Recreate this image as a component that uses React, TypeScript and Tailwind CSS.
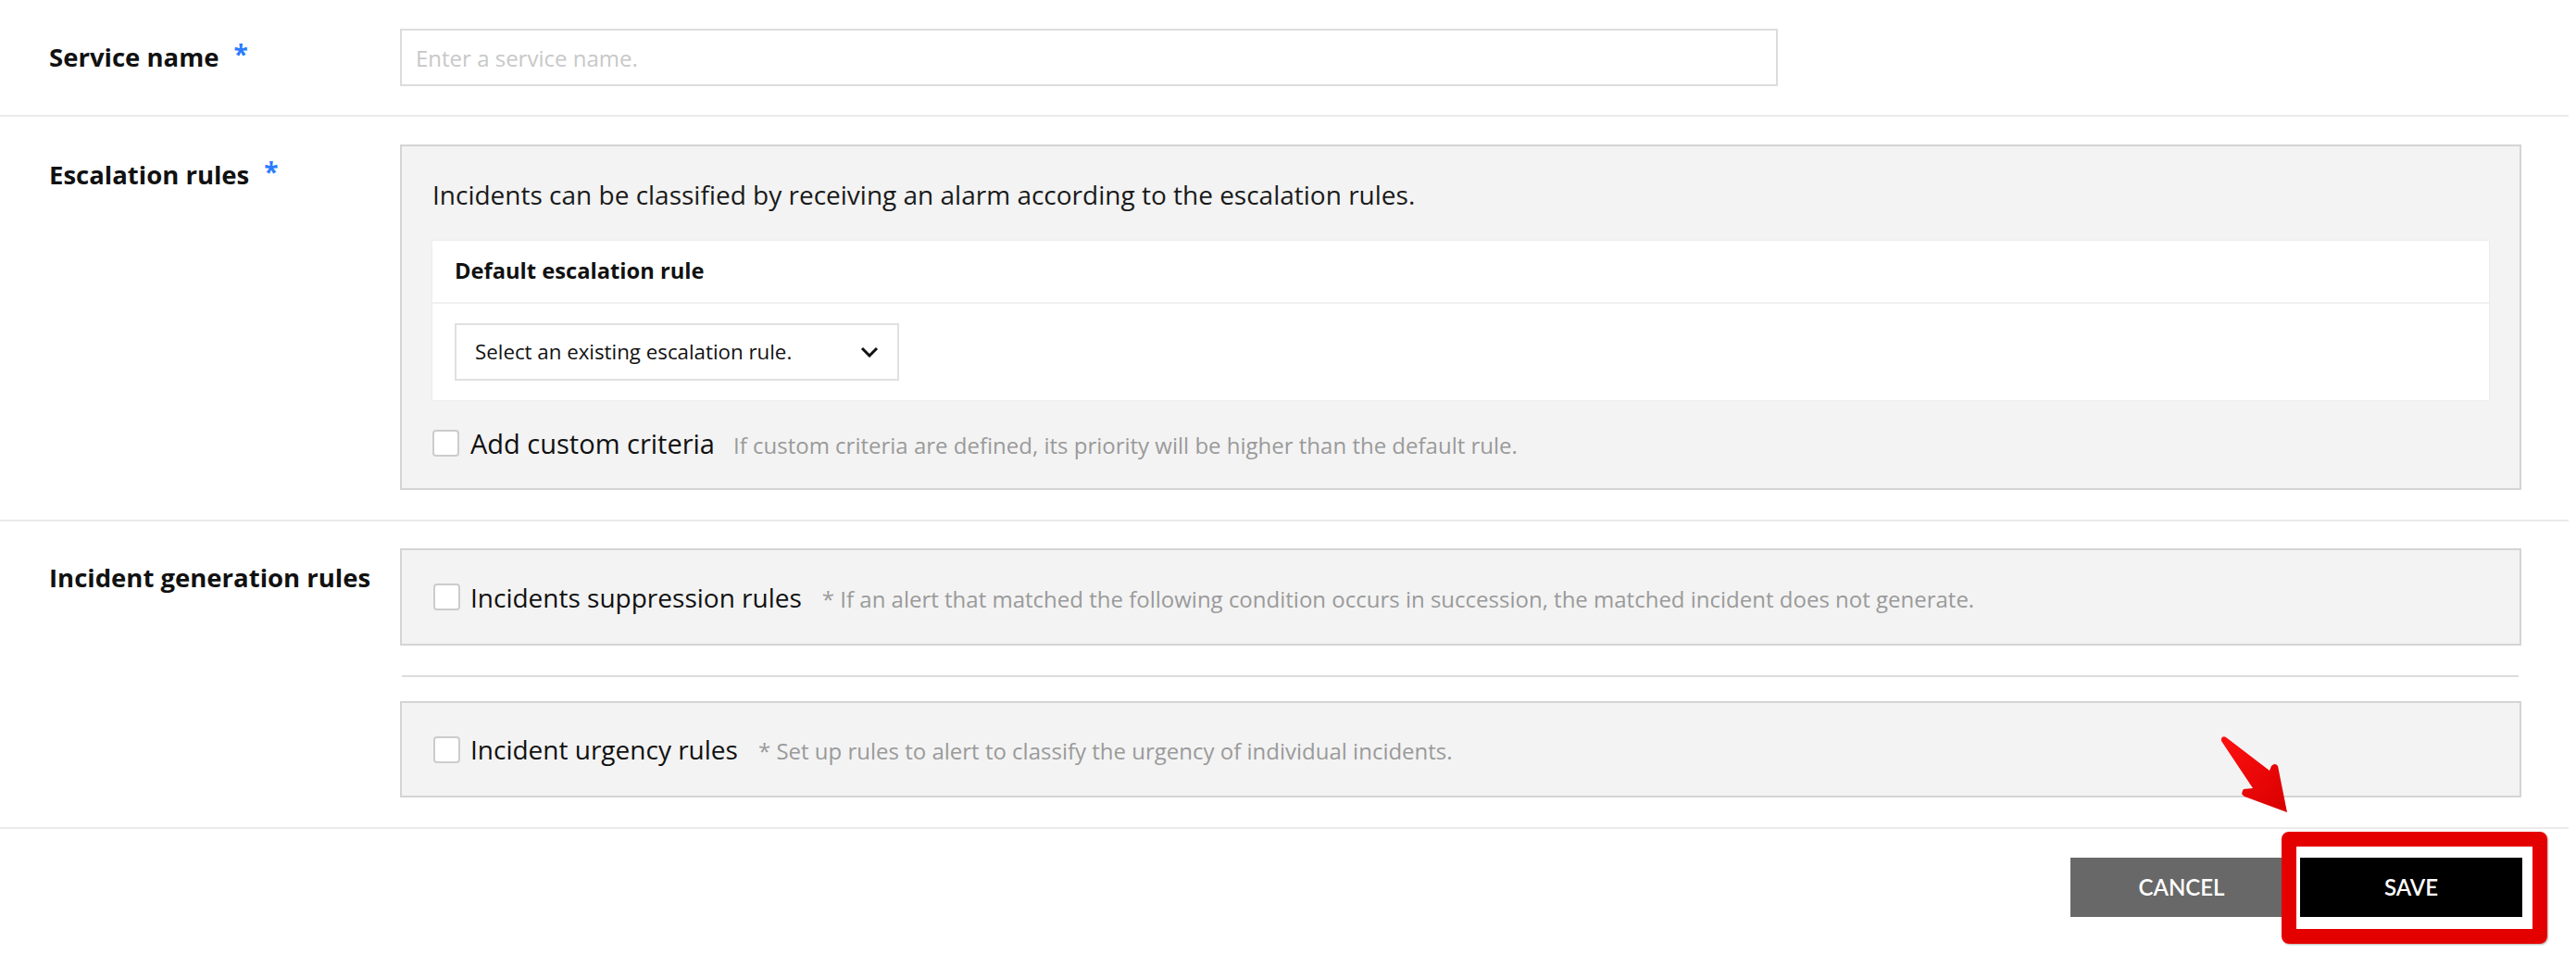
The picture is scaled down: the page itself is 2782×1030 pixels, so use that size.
import React from "react"

// 服务创建表单
function Required() {
  return <span className="ml-[16px] text-[28px] font-bold text-[#2a7bff] leading-none relative top-[-4px]">*</span>
}

function Checkbox() {
  return <span className="w-[29px] h-[29px] shrink-0 rounded-[4px] border-2 border-[#cccccc] bg-white" />
}

function RuleBox({ label, hint, h }: { label: string; hint: string; h: string }) {
  return (
    <div className={`${h} flex items-center bg-[#f3f3f3] border-2 border-[#d4d4d4] pl-[34px]`}>
      <Checkbox />
      <div className="flex items-baseline ml-[11px] h-[34px]">
        <span className="text-[28px] text-[#111] leading-[34px]">{label}</span>
        <span className="ml-[22px] text-[24px] text-[#9a9a9a]">{hint}</span>
      </div>
    </div>
  )
}

export default function App() {
  return (
    <div className="relative w-[2774px] h-[1030px] bg-white overflow-hidden font-['Open_Sans','Noto_Sans',sans-serif] text-[#111]">
      {/* Service name */}
      <div className="flex items-center py-[31px] pl-[53px] pr-[51px] border-b-2 border-[#ebebeb]">
        <div className="w-[379px] shrink-0 flex items-center text-[27.5px] font-bold leading-[36px]">
          Service name
          <Required />
        </div>
        <input
          className="w-[1488px] h-[62px] border-2 border-[#dcdcdc] pl-[15px] text-[24px] outline-none placeholder:text-[#c8c8c8]"
          placeholder="Enter a service name."
        />
      </div>

      {/* Escalation rules */}
      <div className="flex items-start pt-[30px] pb-[32px] pl-[53px] pr-[51px] border-b-2 border-[#ebebeb]">
        <div className="w-[379px] shrink-0 mt-[15px] flex items-center text-[27.5px] font-bold leading-[36px]">
          Escalation rules
          <Required />
        </div>
        <div className="flex-1 bg-[#f3f3f3] border-2 border-[#d4d4d4] px-[33px] pt-[36px] pb-[34px]">
          <p className="h-[32px] text-[28px] leading-[32px] text-[#1a1a1a]">
            Incidents can be classified by receiving an alarm according to the escalation rules.
          </p>
          <div className="mt-[34px] bg-white shadow-[0_0_2px_rgba(0,0,0,0.08)]">
            <div className="h-[68px] flex items-center px-[24px] border-b-2 border-[#f0f0f0] text-[23.7px] font-bold">
              Default escalation rule
            </div>
            <div className="py-[21px] px-[24px]">
              <div className="w-[480px] h-[62px] border-2 border-[#e0e0e0] flex items-center justify-between pl-[20px] pr-[20px]">
                <span className="text-[22.3px] text-[#111]">Select an existing escalation rule.</span>
                <svg width="20" height="12" viewBox="0 0 20 12">
                  <polyline points="2,2 10,10 18,2" fill="none" stroke="#111" strokeWidth="3" />
                </svg>
              </div>
            </div>
          </div>
          <div className="mt-[32px] h-[29px] flex items-center">
            <Checkbox />
            <div className="flex items-baseline ml-[12px] h-[34px]">
              <span className="text-[29px] leading-[34px]">Add custom criteria</span>
              <span className="ml-[20px] text-[24px] text-[#9a9a9a]">
                If custom criteria are defined, its priority will be higher than the default rule.
              </span>
            </div>
          </div>
        </div>
      </div>

      {/* Incident generation rules */}
      <div className="flex items-start pt-[29px] pb-[32px] pl-[53px] pr-[51px] border-b-2 border-[#ebebeb]">
        <div className="w-[379px] shrink-0 mt-[14px] text-[27.5px] font-bold leading-[36px]">Incident generation rules</div>
        <div className="flex-1 flex flex-col">
          <RuleBox
            h="h-[105px]"
            label="Incidents suppression rules"
            hint="* If an alert that matched the following condition occurs in succession, the matched incident does not generate."
          />
          <div className="mt-[32px] mb-[26px] ml-[2px] mr-[3px] h-[2px] bg-[#dcdcdc]" />
          <RuleBox
            h="h-[104px]"
            label="Incident urgency rules"
            hint="* Set up rules to alert to classify the urgency of individual incidents."
          />
        </div>
      </div>

      {/* 底部按钮 */}
      <div className="flex justify-end gap-[8px] pt-[31px] pr-[50px] font-['Lato',sans-serif]">
        <button className="w-[240px] h-[64px] bg-[#686868] text-white text-[24px] font-semibold">CANCEL</button>
        <button className="w-[240px] h-[64px] bg-black text-white text-[24px] font-semibold">SAVE</button>
      </div>

      {/* 标注 */}
      <div className="absolute left-[2464px] top-[898px] w-[287px] h-[121px] border-[16px] border-[#e50000] rounded-[8px] shadow-[1px_1px_2px_rgba(0,0,0,0.3)]" />
      <svg className="absolute left-[2380px] top-[780px]" width="110" height="110" viewBox="0 0 110 110">
        <defs>
          <linearGradient id="arr" x1="0" y1="0" x2="1" y2="1">
            <stop offset="0" stopColor="#ff1010" />
            <stop offset="1" stopColor="#d80000" />
          </linearGradient>
        </defs>
        <path
          d="M19,17 Q21,14 24,16 L71,52 L73,47 Q77,43 80,47 L90,97 L44,80 Q39,77 43,72 L53,71 L19,20 Z"
          fill="url(#arr)"
        />
      </svg>
    </div>
  )
}
